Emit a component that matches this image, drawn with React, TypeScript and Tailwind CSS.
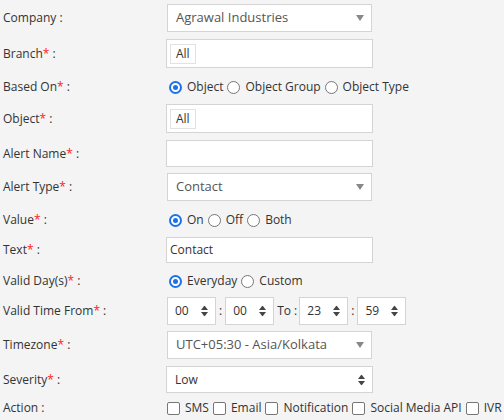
import React from "react";

function Req() {
  return <span className="text-[#ff1a1a]">*</span>;
}

function Label({ text, required }: { text: string; required?: boolean }) {
  return (
    <div className="w-[166px] shrink-0 pl-[3px] text-[12px] text-[#333]">
      {text}
      {required && <Req />} :
    </div>
  );
}

function Caret() {
  return (
    <svg width="8" height="6" viewBox="0 0 8 6" className="absolute right-[7px] top-1/2 -translate-y-1/2">
      <path d="M0 0 L8 0 L4 6 Z" fill="#888" />
    </svg>
  );
}

function UpDown() {
  return (
    <svg width="7" height="11" viewBox="0 0 7 11" className="absolute right-[7px] top-1/2 -translate-y-1/2">
      <path d="M0 4.5 L3.5 0 L7 4.5 Z" fill="#444" />
      <path d="M0 6.5 L3.5 11 L7 6.5 Z" fill="#444" />
    </svg>
  );
}

function Select({ value }: { value: string }) {
  return (
    <div className="relative ml-[1px] flex h-[28px] w-[205px] items-center border border-[#d4d4d4] bg-white pl-[8px] text-[13px] text-[#555]">
      {value}
      <Caret />
    </div>
  );
}

function TagInput() {
  return (
    <div className="flex h-[29px] w-[207px] items-center border border-[#d4d4d4] bg-white pl-[3px]">
      <span className="flex h-[20px] items-center border border-[#e2e2e2] bg-white px-[5px] text-[12px] text-[#333]">
        All
      </span>
    </div>
  );
}

function Radio({ label, checked }: { label: string; checked?: boolean }) {
  return (
    <span className="flex items-center whitespace-nowrap">
      {checked ? (
        <span className="ml-[3px] mr-[5px] flex h-[13px] w-[13px] items-center justify-center rounded-full border-2 border-[#1a73e8] bg-white">
          <span className="h-[5px] w-[5px] rounded-full bg-[#1a73e8]" />
        </span>
      ) : (
        <span className="ml-[4px] mr-[5px] h-[13px] w-[13px] rounded-full border border-[#767676] bg-white" />
      )}
      {label}
    </span>
  );
}

function Check({ label }: { label: string }) {
  return (
    <span className="flex items-center whitespace-nowrap">
      <span className="ml-[4px] mr-[5px] h-[13px] w-[13px] rounded-[2px] border border-[#767676] bg-white" />
      {label}
    </span>
  );
}

function TimeBox({ value }: { value: string }) {
  return (
    <div className="relative flex h-[28px] w-[49px] items-center border border-[#d4d4d4] bg-white pl-[7px] text-[12px] text-[#333]">
      {value}
      <UpDown />
    </div>
  );
}

export default function App() {
  return (
    <div
      className="flex h-[420px] w-[504px] flex-col overflow-hidden bg-[#f4f4f4] text-[12px] text-[#333]"
      style={{ fontFamily: '"Open Sans", sans-serif' }}
    >
      <div className="mt-[4px] flex h-[28px] items-center">
        <Label text="Company" />
        <Select value="Agrawal Industries" />
      </div>

      <div className="mt-[7px] flex h-[29px] items-center">
        <Label text="Branch" required />
        <TagInput />
      </div>

      <div className="mt-[9px] flex h-[20px] items-center">
        <Label text="Based On" required />
        <Radio label="Object" checked />
        <Radio label="Object Group" />
        <Radio label="Object Type" />
      </div>

      <div className="mt-[7px] flex h-[29px] items-center">
        <Label text="Object" required />
        <TagInput />
      </div>

      <div className="mt-[7px] flex h-[27px] items-center">
        <Label text="Alert Name" required />
        <div className="h-[27px] w-[207px] border border-[#d4d4d4] bg-white" />
      </div>

      <div className="mt-[6px] flex h-[28px] items-center">
        <Label text="Alert Type" required />
        <Select value="Contact" />
      </div>

      <div className="mt-[9px] flex h-[20px] items-center">
        <Label text="Value" required />
        <Radio label="On" checked />
        <Radio label="Off" />
        <Radio label="Both" />
      </div>

      <div className="mt-[7px] flex h-[26px] items-center">
        <Label text="Text" required />
        <div className="flex h-[26px] w-[207px] items-center border border-[#d4d4d4] bg-white pl-[3px] text-[12px] text-[#333]">
          Contact
        </div>
      </div>

      <div className="mt-[8px] flex h-[20px] items-center">
        <Label text="Valid Day(s)" required />
        <Radio label="Everyday" checked />
        <Radio label="Custom" />
      </div>

      <div className="mt-[6px] flex h-[28px] items-center">
        <Label text="Valid Time From" required />
        <div className="ml-[1px] flex items-center">
          <TimeBox value="00" />
          <span className="mx-[3px]">:</span>
          <TimeBox value="00" />
          <span className="ml-[3px] mr-[2px]">To :</span>
          <TimeBox value="23" />
          <span className="mx-[3px]">:</span>
          <TimeBox value="59" />
        </div>
      </div>

      <div className="mt-[6px] flex h-[28px] items-center">
        <Label text="Timezone" required />
        <Select value="UTC+05:30 - Asia/Kolkata" />
      </div>

      <div className="mt-[7px] flex h-[27px] items-center">
        <Label text="Severity" required />
        <div className="relative flex h-[27px] w-[207px] items-center border border-[#d4d4d4] bg-white pl-[8px] text-[12px] text-[#333]">
          Low
          <UpDown />
        </div>
      </div>

      <div className="mt-[5px] flex h-[20px] items-center">
        <Label text="Action" />
        <div className="-ml-[3px] flex items-center">
          <Check label="SMS" />
          <Check label="Email" />
          <Check label="Notification" />
          <Check label="Social Media API" />
          <Check label="IVR" />
        </div>
      </div>
    </div>
  );
}
